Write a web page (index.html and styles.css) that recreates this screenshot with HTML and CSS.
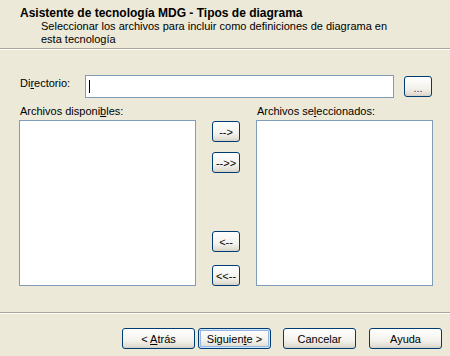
FILE: index.html
```html
<!DOCTYPE html>
<html lang="es">

<head>
    <meta charset="UTF-8">
    <meta name="viewport" content="width=device-width, initial-scale=1.0">
    <title>Asistente de tecnología MDG</title>
    <link rel="stylesheet" href="styles.css">
</head>

<body>
    <div class="wizard">
        <div class="header">
            <div class="title">Asistente de tecnología MDG - Tipos de diagrama</div>
            <div class="subtitle">Seleccionar los archivos para incluir como definiciones de diagrama en<br>esta tecnología</div>
        </div>

        <div class="content">
            <div class="dir-row">
                <label class="dir-label" for="dir">Di<u>r</u>ectorio:</label>
                <div class="dir-input"><span class="caret"></span></div>
                <button class="btn btn-small btn-browse">...</button>
            </div>

            <div class="lists">
                <div class="list-col">
                    <div class="list-label">Archivos disponi<u>b</u>les:</div>
                    <div class="listbox"></div>
                </div>
                <div class="move-buttons">
                    <button class="btn btn-small move-one">--&gt;</button>
                    <button class="btn btn-small move-all">--&gt;&gt;</button>
                    <button class="btn btn-small back-one">&lt;--</button>
                    <button class="btn btn-small back-all">&lt;&lt;--</button>
                </div>
                <div class="list-col">
                    <div class="list-label">Archivos se<u>l</u>eccionados:</div>
                    <div class="listbox"></div>
                </div>
            </div>
        </div>

        <div class="footer">
            <button class="btn btn-nav">&lt; <u>A</u>trás</button>
            <button class="btn btn-nav focused">Siguien<u>t</u>e &gt;</button>
            <button class="btn btn-nav cancel">Cancelar</button>
            <button class="btn btn-nav help">Ayuda</button>
        </div>
    </div>
</body>

</html>
```

FILE: styles.css
```css
* {
    margin: 0;
    padding: 0;
    box-sizing: border-box;
}

body {
    background-color: #ece9d8;
    font-family: "Liberation Sans", Arial, sans-serif;
    font-size: 11px;
    color: #000;
}

u {
    text-decoration: underline;
}

.wizard {
    display: flex;
    flex-direction: column;
    width: 450px;
    height: 356px;
}

/* cabecera */
.header {
    height: 49px;
    padding: 7px 0 0 20px;
    line-height: 13px;
    border-bottom: 1px solid #aca899;
    box-shadow: 0 1px 0 #fff;
}

.title {
    font-weight: bold;
    font-size: 12px;
}

.subtitle {
    padding-left: 21px;
}

/* contenido */
.content {
    padding-top: 26px;
}

.dir-row {
    display: flex;
    align-items: center;
}

.dir-label {
    width: 85px;
    padding-left: 20px;
    margin-top: -7px;
}

.dir-input {
    display: flex;
    align-items: center;
    width: 309px;
    height: 23px;
    padding-left: 3px;
    background-color: #fff;
    border: 1px solid #7f9db9;
}

.caret {
    width: 1px;
    height: 13px;
    background-color: #000;
}

.btn {
    font-family: "Liberation Sans", Arial, sans-serif;
    font-size: 11px;
    color: #000;
    border: 1px solid #003c74;
    border-radius: 3px;
    background: linear-gradient(#fff, #f3f2ec 60%, #e3e0d6 88%, #d6d0c5);
    cursor: pointer;
}

.btn-small {
    width: 28px;
    height: 21px;
    line-height: 18px;
}

.btn-browse {
    margin-left: 10px;
    color: #7a1848;
    line-height: 22px;
}

.lists {
    display: flex;
    align-items: flex-start;
    padding-left: 19px;
    margin-top: 7px;
}

.list-label {
    padding-left: 1px;
    line-height: 13px;
    margin-bottom: 2px;
}

.listbox {
    width: 177px;
    height: 166px;
    background-color: #fff;
    border: 1px solid #7f9db9;
}

.move-buttons {
    display: flex;
    flex-direction: column;
    margin: 16px 16px 0;
}

.move-all {
    margin-top: 10px;
}

.back-one {
    margin-top: 58px;
}

.back-all {
    margin-top: 13px;
}

/* botones de abajo */
.footer {
    display: flex;
    justify-content: flex-end;
    margin-top: auto;
    height: 44px;
    padding: 15px 8px 0 0;
    border-top: 1px solid #aca899;
    box-shadow: inset 0 1px 0 #fff;
}

.btn-nav {
    width: 73px;
    height: 21px;
}

.focused {
    margin-left: 3px;
    box-shadow: inset 0 0 0 1px #cee7ff, inset 0 0 0 2px #98b5e2;
}

.cancel {
    margin-left: 12px;
}

.help {
    margin-left: 13px;
}
```
